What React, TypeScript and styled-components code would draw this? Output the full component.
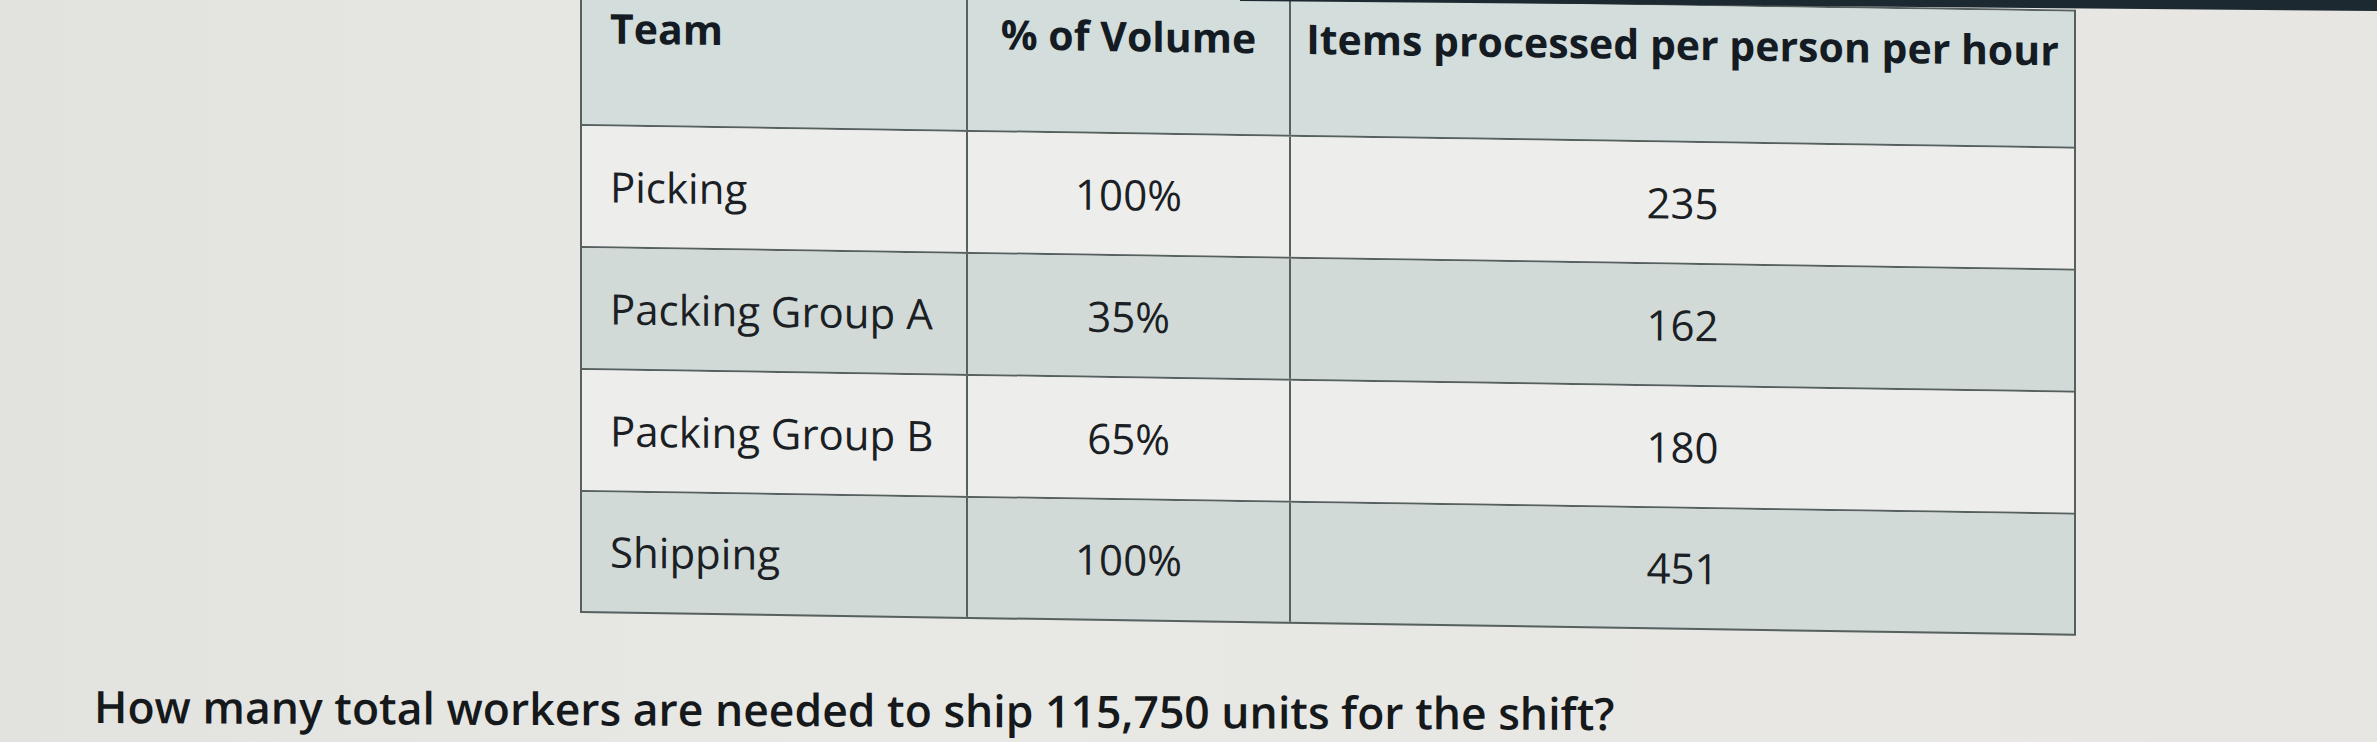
import React from "react";
import styled, { createGlobalStyle } from "styled-components";

const Global = createGlobalStyle`
  html, body { margin: 0; padding: 0; }
  body {
    width: 2377px;
    height: 742px;
    overflow: hidden;
    background: #e6e6e3;
    font-family: "Open Sans", "Noto Sans", sans-serif;
    color: #1b2125;
  }
`;

const Page = styled.main`
  position: relative;
  width: 2377px;
  height: 742px;
  overflow: hidden;
  display: flex;
  flex-direction: column;
  background: linear-gradient(90deg, #e2e2df 0%, #e8e8e5 35%, #e7e6e3 100%);
`;

const ScreenEdge = styled.div`
  position: absolute;
  top: 0;
  left: 0;
  right: 0;
  height: 12px;
  background: #1d2931;
  clip-path: polygon(1240px 0, 100% 0, 100% 11px, 1240px 1px);
  z-index: 2;
`;

const TableFrame = styled.section`
  margin: -13px 0 0 580px;
  width: 1496px;
  transform-origin: 0 0;
  transform: skewY(0.87deg);
  border-left: 2px solid #56605f;
  border-right: 2px solid #56605f;
  border-top: 2px solid #56605f;
  box-sizing: border-box;
`;

const Row = styled.div<{ $tone: "head" | "light" | "shade"; $h: number }>`
  display: grid;
  grid-template-columns: 386px 323px 1fr;
  height: ${(p) => p.$h}px;
  box-sizing: border-box;
  border-bottom: 2px solid #56605f;
  background: ${(p) =>
    p.$tone === "head" ? "#d3dddc" : p.$tone === "shade" ? "#d2dad7" : "#edeeec"};
`;

const Cell = styled.div<{ $first?: boolean; $head?: boolean }>`
  display: flex;
  align-items: ${(p) => (p.$head ? "flex-start" : "center")};
  justify-content: ${(p) => (p.$first ? "flex-start" : "center")};
  padding: ${(p) => (p.$head ? "14px" : "0")} 0 0 ${(p) => (p.$first ? "28px" : "0")};
  box-sizing: border-box;
  border-right: 2px solid #56605f;
  font-size: ${(p) => (p.$head ? 41 : 42)}px;
  line-height: 1.2;
  font-weight: ${(p) => (p.$head ? 700 : 400)};
  color: ${(p) => (p.$head ? "#141b23" : "#1a2024")};
  white-space: nowrap;
  &:last-child { border-right: none; }
`;

const Question = styled.p`
  margin: 66px 0 0 94px;
  font-size: 44.5px;
  line-height: 1.2;
  font-weight: 600;
  color: #16191b;
  white-space: nowrap;
  transform-origin: 0 0;
  transform: skewY(0.27deg);
`;

const rows = [
  { team: "Picking", vol: "100%", rate: "235" },
  { team: "Packing Group A", vol: "35%", rate: "162" },
  { team: "Packing Group B", vol: "65%", rate: "180" },
  { team: "Shipping", vol: "100%", rate: "451" },
];

const heights = [122, 122, 122, 121];

export default function App() {
  return (
    <Page>
      <Global />
      <ScreenEdge />
      <TableFrame>
        <Row $tone="head" $h={137}>
          <Cell $first $head>Team</Cell>
          <Cell $head>% of Volume</Cell>
          <Cell $head>Items processed per person per hour</Cell>
        </Row>
        {rows.map((r, i) => (
          <Row key={r.team} $tone={i % 2 === 0 ? "light" : "shade"} $h={heights[i]}>
            <Cell $first>{r.team}</Cell>
            <Cell>{r.vol}</Cell>
            <Cell>{r.rate}</Cell>
          </Row>
        ))}
      </TableFrame>
      <Question>How many total workers are needed to ship 115,750 units for the shift?</Question>
    </Page>
  );
}
